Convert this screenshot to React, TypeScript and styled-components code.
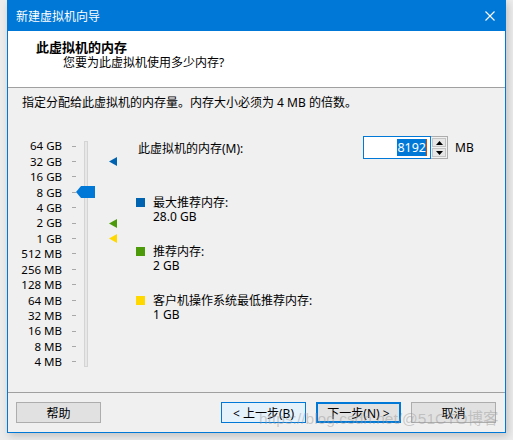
import styled, { createGlobalStyle } from "styled-components";

const GlobalStyle = createGlobalStyle`
  html, body {
    margin: 0;
    padding: 0;
    background: #ececec;
  }
  body {
    font-family: "Noto Sans", "Noto Sans CJK SC", sans-serif;
    font-size: 12px;
    color: #000;
  }
`;

const SCALE = [
  "64 GB",
  "32 GB",
  "16 GB",
  "8 GB",
  "4 GB",
  "2 GB",
  "1 GB",
  "512 MB",
  "256 MB",
  "128 MB",
  "64 MB",
  "32 MB",
  "16 MB",
  "8 MB",
  "4 MB",
];

const ROW = 15.43;

const MARKERS = [
  { row: 1, color: "#0063b1" },
  { row: 5, color: "#4c9a0a" },
  { row: 6, color: "#ffd800" },
];

const LEGEND = [
  { color: "#0063b1", label: "最大推荐内存:", value: "28.0 GB" },
  { color: "#4c9a0a", label: "推荐内存:", value: "2 GB" },
  { color: "#ffd800", label: "客户机操作系统最低推荐内存:", value: "1 GB" },
];

const App = () => {
  return (
    <>
      <GlobalStyle />
      <Page>
        <Window>
          <TitleBar>
            <TitleText>新建虚拟机向导</TitleText>
            <CloseButton>
              <svg width="10" height="10" viewBox="0 0 10 10">
                <path d="M0.5 0.5 L9.5 9.5 M9.5 0.5 L0.5 9.5" stroke="#fff" strokeWidth="1.1" />
              </svg>
            </CloseButton>
          </TitleBar>
          <Header>
            <HeaderTitle>此虚拟机的内存</HeaderTitle>
            <HeaderSub>您要为此虚拟机使用多少内存?</HeaderSub>
          </Header>
          <Content>
            <Instruction>指定分配给此虚拟机的内存量。内存大小必须为 4 MB 的倍数。</Instruction>
            <Body>
              <SliderBlock>
                <Labels>
                  {SCALE.map((s) => (
                    <LabelRow key={s}>{s}</LabelRow>
                  ))}
                </Labels>
                <Ticks>
                  {SCALE.map((s) => (
                    <TickRow key={s}>
                      <Tick />
                    </TickRow>
                  ))}
                </Ticks>
                <Track />
                <Thumb style={{ top: 2.3 + 3 * ROW + ROW / 2 - 6 }}>
                  <svg width="19" height="12" viewBox="0 0 19 12">
                    <path d="M0 6 L5 0 H19 V12 H5 Z" fill="#0078d7" />
                  </svg>
                </Thumb>
                {MARKERS.map((m) => (
                  <Marker key={m.row} style={{ top: 2.3 + m.row * ROW + ROW / 2 - 4.5 }}>
                    <svg width="8" height="9" viewBox="0 0 8 9">
                      <path d="M0 4.5 L8 0 V9 Z" fill={m.color} />
                    </svg>
                  </Marker>
                ))}
              </SliderBlock>
              <RightPanel>
                <MemoryRow>
                  <MemoryLabel>此虚拟机的内存(M):</MemoryLabel>
                  <Input>
                    <Selected>8192</Selected>
                    <Caret />
                  </Input>
                  <Spinner>
                    <SpinButton>
                      <svg width="7" height="4" viewBox="0 0 7 4">
                        <path d="M0 4 L3.5 0 L7 4 Z" fill="#000" />
                      </svg>
                    </SpinButton>
                    <SpinButton>
                      <svg width="7" height="4" viewBox="0 0 7 4">
                        <path d="M0 0 L3.5 4 L7 0 Z" fill="#000" />
                      </svg>
                    </SpinButton>
                  </Spinner>
                  <Unit>MB</Unit>
                </MemoryRow>
                <Legend>
                  {LEGEND.map((l) => (
                    <LegendItem key={l.label}>
                      <Swatch color={l.color} />
                      <LegendText>
                        <div>{l.label}</div>
                        <div>{l.value}</div>
                      </LegendText>
                    </LegendItem>
                  ))}
                </Legend>
              </RightPanel>
            </Body>
          </Content>
          <Footer>
            <Button>帮助</Button>
            <Spacer />
            <Button variant="hover">&lt; 上一步(B)</Button>
            <Button variant="default">下一步(N) &gt;</Button>
            <Button>取消</Button>
            <Watermark>https://blog.csdn.net/@51CTO博客</Watermark>
          </Footer>
        </Window>
      </Page>
    </>
  );
};

export default App;

const Page = styled.div`
  width: 513px;
  height: 440px;
  padding-left: 7px;
  box-sizing: border-box;
  overflow: hidden;
`;

const Window = styled.div`
  width: 499px;
  height: 433px;
  box-sizing: border-box;
  border: 1px solid #0078d7;
  border-top: none;
  background: #f0f0f0;
  display: flex;
  flex-direction: column;
  box-shadow: 2px 3px 8px rgba(0, 0, 0, 0.18);
`;

const TitleBar = styled.div`
  height: 31px;
  flex-shrink: 0;
  box-sizing: border-box;
  background: #0078d7;
  display: flex;
  align-items: center;
  justify-content: space-between;
  padding: 0 10px 0 8px;
`;

const TitleText = styled.span`
  color: #fff;
  font-size: 12px;
`;

const CloseButton = styled.div`
  display: flex;
  align-items: center;
  margin-top: 1px;
`;

const Header = styled.div`
  height: 57px;
  flex-shrink: 0;
  box-sizing: border-box;
  background: #fff;
  border-bottom: 1px solid #a0a0a0;
  padding: 8px 0 0 28px;
`;

const HeaderTitle = styled.div`
  font-weight: bold;
  font-size: 13px;
  line-height: 16px;
`;

const HeaderSub = styled.div`
  line-height: 16px;
  padding-left: 27px;
`;

const Content = styled.div`
  height: 304px;
  flex-shrink: 0;
  padding-top: 7px;
  box-sizing: border-box;
`;

const Instruction = styled.div`
  line-height: 16px;
  padding-left: 14px;
`;

const Body = styled.div`
  display: flex;
  margin-top: 25px;
`;

const SliderBlock = styled.div`
  position: relative;
  width: 128px;
  height: 236px;
  display: flex;
  align-items: flex-start;
`;

const Labels = styled.div`
  width: 54px;
  padding-top: 2.3px;
  display: flex;
  flex-direction: column;
`;

const LabelRow = styled.div`
  height: ${ROW}px;
  line-height: ${ROW}px;
  text-align: right;
  white-space: nowrap;
  font-size: 11.5px;
`;

const Ticks = styled.div`
  width: 4px;
  margin-left: 10px;
  padding-top: 2.3px;
  display: flex;
  flex-direction: column;
`;

const TickRow = styled.div`
  height: ${ROW}px;
  display: flex;
  align-items: center;
`;

const Tick = styled.div`
  width: 4px;
  height: 1px;
  background: #a8a8a8;
`;

const Track = styled.div`
  width: 4px;
  height: 226px;
  margin: 5px 0 0 8px;
  box-sizing: border-box;
  border: 1px solid #d4d4d4;
  background: #e7e7e7;
`;

const Thumb = styled.div`
  position: absolute;
  left: 68px;
  display: flex;
`;

const Marker = styled.div`
  position: absolute;
  left: 101px;
  display: flex;
`;

const RightPanel = styled.div`
  display: flex;
  flex-direction: column;
`;

const MemoryRow = styled.div`
  display: flex;
  align-items: center;
  height: 23px;
`;

const MemoryLabel = styled.div`
  width: 225px;
  margin-left: 2px;
`;

const Input = styled.div`
  width: 68px;
  height: 23px;
  box-sizing: border-box;
  border: 1px solid #0078d7;
  background: #fff;
  display: flex;
  align-items: center;
  justify-content: flex-end;
  padding-right: 3px;
`;

const Selected = styled.span`
  background: #0078d7;
  color: #fff;
  line-height: 17px;
  font-size: 12.5px;
`;

const Caret = styled.span`
  width: 1px;
  height: 17px;
  background: #d04a00;
`;

const Spinner = styled.div`
  width: 17px;
  height: 23px;
  box-sizing: border-box;
  border: 1px solid #adadad;
  border-left: none;
  background: #f0f0f0;
  display: flex;
  flex-direction: column;
  justify-content: space-between;
  padding: 1px 1px;
`;

const SpinButton = styled.div`
  height: 9px;
  box-sizing: border-box;
  border: 1px solid #c4c4c4;
  background: #e6e6e6;
  display: flex;
  align-items: center;
  justify-content: center;
`;

const Unit = styled.span`
  margin-left: 7px;
`;

const Legend = styled.div`
  display: flex;
  flex-direction: column;
  gap: 21px;
  margin-top: 37px;
`;

const LegendItem = styled.div`
  display: flex;
  align-items: flex-start;
  gap: 8px;
`;

const Swatch = styled.div<{ color: string }>`
  width: 9px;
  height: 9px;
  margin-top: 2px;
  background: ${({ color }) => color};
`;

const LegendText = styled.div`
  line-height: 14px;
`;

const Footer = styled.div`
  position: relative;
  flex: 1;
  border-top: 1px solid #a0a0a0;
  display: flex;
  align-items: flex-start;
  gap: 10px;
  padding: 9px 9px 0 8px;
`;

const Spacer = styled.div`
  flex: 1;
`;

const Button = styled.div<{ variant?: "hover" | "default" }>`
  width: 85px;
  height: 21px;
  box-sizing: border-box;
  display: flex;
  align-items: center;
  justify-content: center;
  border: ${({ variant }) =>
    variant === "default"
      ? "2px solid #0078d7"
      : variant === "hover"
      ? "1px solid #0078d7"
      : "1px solid #adadad"};
  background: ${({ variant }) => (variant === "hover" ? "#e5f1fb" : "#e1e1e1")};
`;

const Watermark = styled.div`
  position: absolute;
  left: 251px;
  top: 13px;
  font-family: "Liberation Sans", "Noto Sans CJK SC", sans-serif;
  font-size: 15.5px;
  color: rgba(150, 150, 150, 0.45);
  white-space: nowrap;
  pointer-events: none;
`;
